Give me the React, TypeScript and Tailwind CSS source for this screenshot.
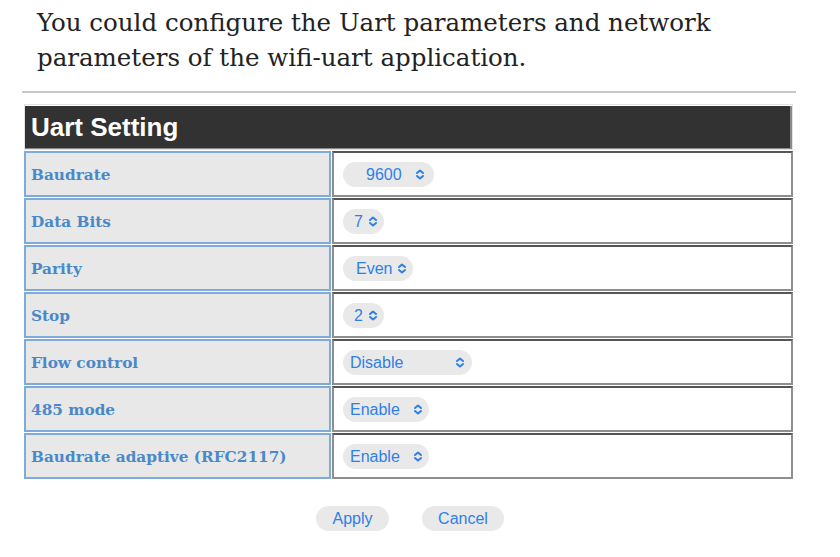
import React from "react";

const Chevrons = () => (
  <svg width="10" height="11" viewBox="0 0 10 11" fill="none" stroke="#2f7fe8" strokeWidth="2" strokeLinecap="round" strokeLinejoin="round">
    <path d="M2 4 L5 1.5 L8 4" />
    <path d="M2 7 L5 9.5 L8 7" />
  </svg>
);

type RowDef = {
  label: string;
  value: string;
  pill: string;
};

const rows: RowDef[] = [
  { label: "Baudrate", value: "9600", pill: "w-[91px] pl-[23px] pr-[9px]" },
  { label: "Data Bits", value: "7", pill: "w-[41px] pl-[11px] pr-[6px]" },
  { label: "Parity", value: "Even", pill: "w-[70px] pl-[13px] pr-[6px]" },
  { label: "Stop", value: "2", pill: "w-[41px] pl-[11px] pr-[6px]" },
  { label: "Flow control", value: "Disable", pill: "w-[129px] pl-[7px] pr-[7px]" },
  { label: "485 mode", value: "Enable", pill: "w-[86px] pl-[7px] pr-[6px]" },
  { label: "Baudrate adaptive (RFC2117)", value: "Enable", pill: "w-[86px] pl-[7px] pr-[6px]" },
];

export default function App() {
  return (
    <div className="w-[840px] h-[557px] bg-white overflow-hidden">
      <p
        className="ml-[37px] pt-[5px] text-[24.5px] leading-[35px] text-[#222]"
        style={{ fontFamily: '"DejaVu Serif", serif' }}
      >
        You could configure the Uart parameters and network
        <br />
        parameters of the wifi-uart application.
      </p>
      <div className="ml-[22px] mt-[16px] w-[774px] h-[2px] bg-[#c8c8c8]" />
      <div className="ml-[24px] mt-[11px] w-[769px] flex flex-col gap-[1px]">
        <div className="h-[46px] border border-[#e2e2e2] flex">
          <div className="flex-1 mt-[1px] bg-[#323232] border-r-2 border-b border-[#8a8a8a] flex items-center pl-[6px]">
            <span
              className="text-white font-bold text-[26px] leading-none"
              style={{ fontFamily: '"Liberation Sans", Arial, sans-serif' }}
            >
              Uart Setting
            </span>
          </div>
        </div>
        {rows.map((r) => (
          <div key={r.label} className="h-[46px] flex gap-[1px]">
            <div className="w-[307px] h-full bg-[#e8e8e8] border-2 border-[#7eaadc] flex items-center pl-[5px] pt-[3px]">
              <span
                className="font-bold text-[15.3px] text-[#4b88c9]"
                style={{ fontFamily: '"DejaVu Serif", serif' }}
              >
                {r.label}
              </span>
            </div>
            <div className="flex-1 h-full bg-white border-2 border-[#8e8e8e] border-t-[#555] flex items-center pl-[9px] pt-[1px]">
              <div
                className={`h-[25px] rounded-full bg-[#e9e9ea] flex items-center justify-between ${r.pill}`}
                style={{ fontFamily: '"Liberation Sans", Arial, sans-serif' }}
              >
                <span className="text-[16px] text-[#2f7fe8] leading-none">{r.value}</span>
                <Chevrons />
              </div>
            </div>
          </div>
        ))}
      </div>
      <div
        className="mt-[27px] ml-[316px] flex gap-[33px]"
        style={{ fontFamily: '"Liberation Sans", Arial, sans-serif' }}
      >
        <div className="w-[73px] h-[25px] rounded-full bg-[#e9e9ea] flex items-center justify-center text-[16px] text-[#2f7fe8]">
          Apply
        </div>
        <div className="w-[82px] h-[25px] rounded-full bg-[#e9e9ea] flex items-center justify-center text-[16px] text-[#2f7fe8]">
          Cancel
        </div>
      </div>
    </div>
  );
}
